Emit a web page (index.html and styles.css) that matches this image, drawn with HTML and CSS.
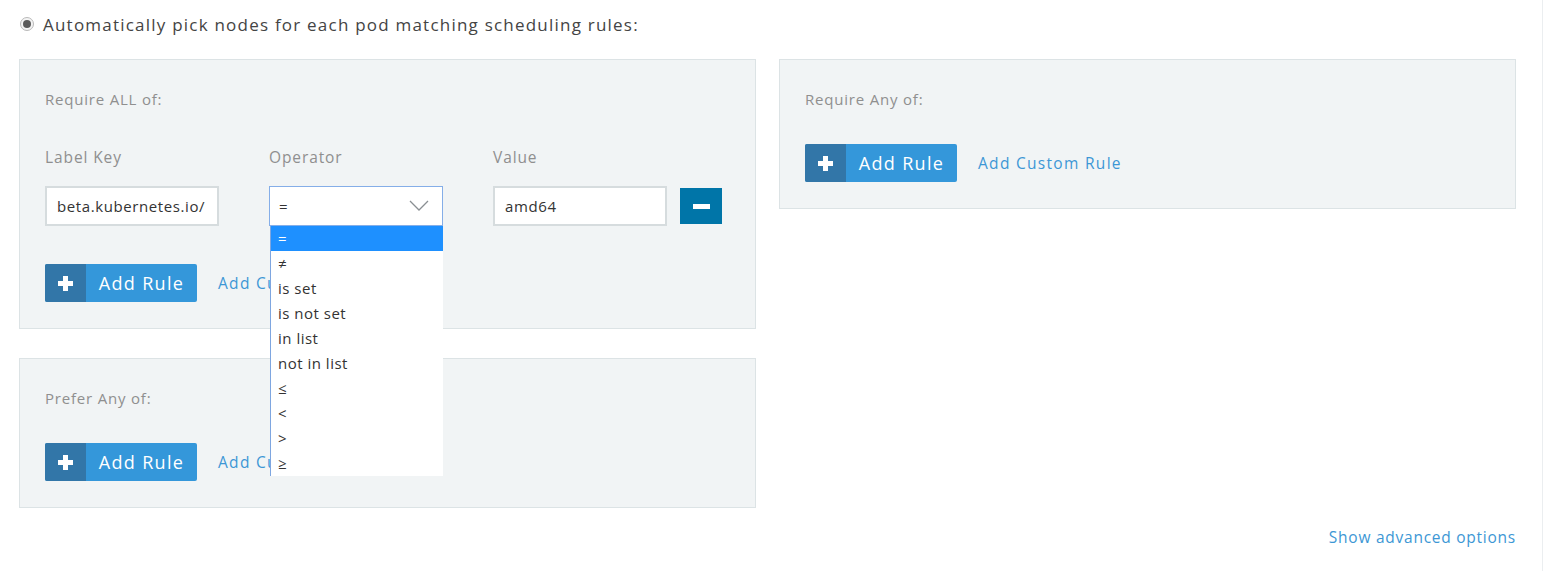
FILE: index.html
```html
<!DOCTYPE html>
<html>
<head>
<meta charset="utf-8">
<link rel="stylesheet" href="styles.css">
</head>
<body>
<div class="page">
  <label class="radio-row">
    <span class="radio"><span class="radio-dot"></span></span>
    <span class="radio-text">Automatically pick nodes for each pod matching scheduling rules:</span>
  </label>

  <div class="grid">
    <div class="col">
      <section class="panel panel-all">
        <div class="panel-title">Require ALL of:</div>
        <div class="rule-head">
          <div class="field-label">Label Key</div>
          <div class="field-label">Operator</div>
          <div class="field-label">Value</div>
        </div>
        <div class="rule-row">
          <div class="input"><span class="input-text">beta.kubernetes.io/</span></div>
          <div class="select-wrap">
            <div class="input select">
              <span class="input-text">=</span>
              <svg class="chev" width="20" height="12" viewBox="0 0 20 12"><path d="M1 1 L10 10 L19 1" fill="none" stroke="#8a8f93" stroke-width="1.3"/></svg>
            </div>
            <ul class="dropdown">
              <li class="opt selected">=</li>
              <li class="opt">≠</li>
              <li class="opt">is set</li>
              <li class="opt">is not set</li>
              <li class="opt">in list</li>
              <li class="opt">not in list</li>
              <li class="opt">≤</li>
              <li class="opt">&lt;</li>
              <li class="opt">&gt;</li>
              <li class="opt">≥</li>
            </ul>
          </div>
          <div class="input"><span class="input-text">amd64</span></div>
          <button class="remove"><span class="minus"></span></button>
        </div>
        <div class="actions">
          <button class="add-btn"><span class="add-icon"><span class="plus"></span></span><span class="add-text">Add Rule</span></button>
          <a class="link">Add Custom Rule</a>
        </div>
      </section>

      <section class="panel">
        <div class="panel-title">Prefer Any of:</div>
        <div class="actions">
          <button class="add-btn"><span class="add-icon"><span class="plus"></span></span><span class="add-text">Add Rule</span></button>
          <a class="link">Add Custom Rule</a>
        </div>
      </section>
    </div>

    <div class="col">
      <section class="panel">
        <div class="panel-title">Require Any of:</div>
        <div class="actions">
          <button class="add-btn"><span class="add-icon"><span class="plus"></span></span><span class="add-text">Add Rule</span></button>
          <a class="link">Add Custom Rule</a>
        </div>
      </section>
    </div>
  </div>

  <div class="footer">
    <a class="link advanced">Show advanced options</a>
  </div>
</div>
</body>
</html>
```

FILE: styles.css
```css
* { box-sizing: border-box; }
html, body {
  margin: 0;
  padding: 0;
  background: #fff;
}
body {
  font-family: "Open Sans", "Noto Sans", sans-serif;
  color: #444;
}
.page {
  width: 1543px;
  min-height: 571px;
  border-right: 1px solid #ebeef0;
  padding: 12px 26px 0 19px;
}
.radio-row {
  display: flex;
  align-items: center;
  gap: 9px;
  height: 24px;
}
.radio {
  width: 14px;
  height: 14px;
  border-radius: 50%;
  border: 1px solid #b9b9b9;
  background: #f4f4f4;
  display: flex;
  align-items: center;
  justify-content: center;
  margin-left: 1px;
}
.radio-dot {
  width: 8px;
  height: 8px;
  border-radius: 50%;
  background: #5b5b5b;
}
.radio-text {
  font-size: 17px;
  color: #444;
  letter-spacing: 1.22px;
}
.grid {
  margin-top: 23px;
  display: grid;
  grid-template-columns: 737px 737px;
  gap: 23px;
  align-items: start;
}
.col {
  display: flex;
  flex-direction: column;
  gap: 29px;
}
.panel {
  background: #f1f4f5;
  border: 1px solid #dce3e5;
  padding: 29px 25px 26px 25px;
}
.panel-title {
  font-size: 15px;
  line-height: 20px;
  color: #8f8f8f;
  letter-spacing: 0.8px;
  margin-bottom: 35px;
}
.panel-all .panel-title {
  margin-bottom: 38px;
}
.rule-head {
  display: flex;
  gap: 50px;
  margin-bottom: 19px;
}
.field-label {
  width: 174px;
  font-size: 15.5px;
  line-height: 20px;
  color: #8f8f8f;
  letter-spacing: 0.9px;
}
.rule-row {
  display: flex;
  align-items: center;
  gap: 50px;
  margin-bottom: 38px;
}
.input {
  width: 174px;
  height: 40px;
  background: #fff;
  border: 2px solid #d6dcde;
  display: flex;
  align-items: center;
  padding: 0 10px;
}
.input-text {
  font-size: 15px;
  color: #333;
  letter-spacing: 0.6px;
  white-space: nowrap;
  overflow: hidden;
}
.select-wrap {
  position: relative;
  width: 174px;
}
.select {
  border: 1px solid #85aee8;
  justify-content: space-between;
  padding: 0 13px 0 9px;
}
.chev { display: block; }
.dropdown {
  position: absolute;
  left: 1px;
  top: 40px;
  width: 173px;
  margin: 0;
  padding: 0;
  list-style: none;
  background: #fff;
  border-left: 1px solid #7ea6e0;
  z-index: 5;
}
.opt {
  height: 25px;
  line-height: 25px;
  padding-left: 7px;
  font-size: 15px;
  color: #333;
  letter-spacing: 0.5px;
}
.opt.selected {
  background: #1e90ff;
  color: #fff;
}
.remove {
  margin-left: -37px;
  width: 42px;
  height: 36px;
  border: none;
  background: #0075a8;
  display: flex;
  align-items: center;
  justify-content: center;
  padding: 0;
}
.minus {
  width: 17px;
  height: 5px;
  background: #fff;
}
.actions {
  display: flex;
  align-items: center;
  gap: 21px;
}
.add-btn {
  display: flex;
  width: 152px;
  height: 38px;
  border: none;
  padding: 0;
  border-radius: 2px;
  overflow: hidden;
  background: #3497da;
  font-family: inherit;
}
.add-icon {
  width: 41px;
  height: 100%;
  background: #3276a8;
  display: flex;
  align-items: center;
  justify-content: center;
}
.plus {
  position: relative;
  width: 15px;
  height: 15px;
}
.plus::before, .plus::after {
  content: "";
  position: absolute;
  background: #fff;
}
.plus::before {
  left: 0; top: 5px; width: 15px; height: 5px;
}
.plus::after {
  left: 5px; top: 0; width: 5px; height: 15px;
}
.add-text {
  flex: 1;
  display: flex;
  align-items: center;
  justify-content: center;
  color: #fff;
  font-size: 18px;
  letter-spacing: 1.3px;
}
.link {
  color: #3d97d5;
  font-size: 15.5px;
  letter-spacing: 1.3px;
  cursor: pointer;
}
.footer {
  display: flex;
  justify-content: flex-end;
  margin-top: 18px;
}
.advanced {
  letter-spacing: 0.75px;
}
```
